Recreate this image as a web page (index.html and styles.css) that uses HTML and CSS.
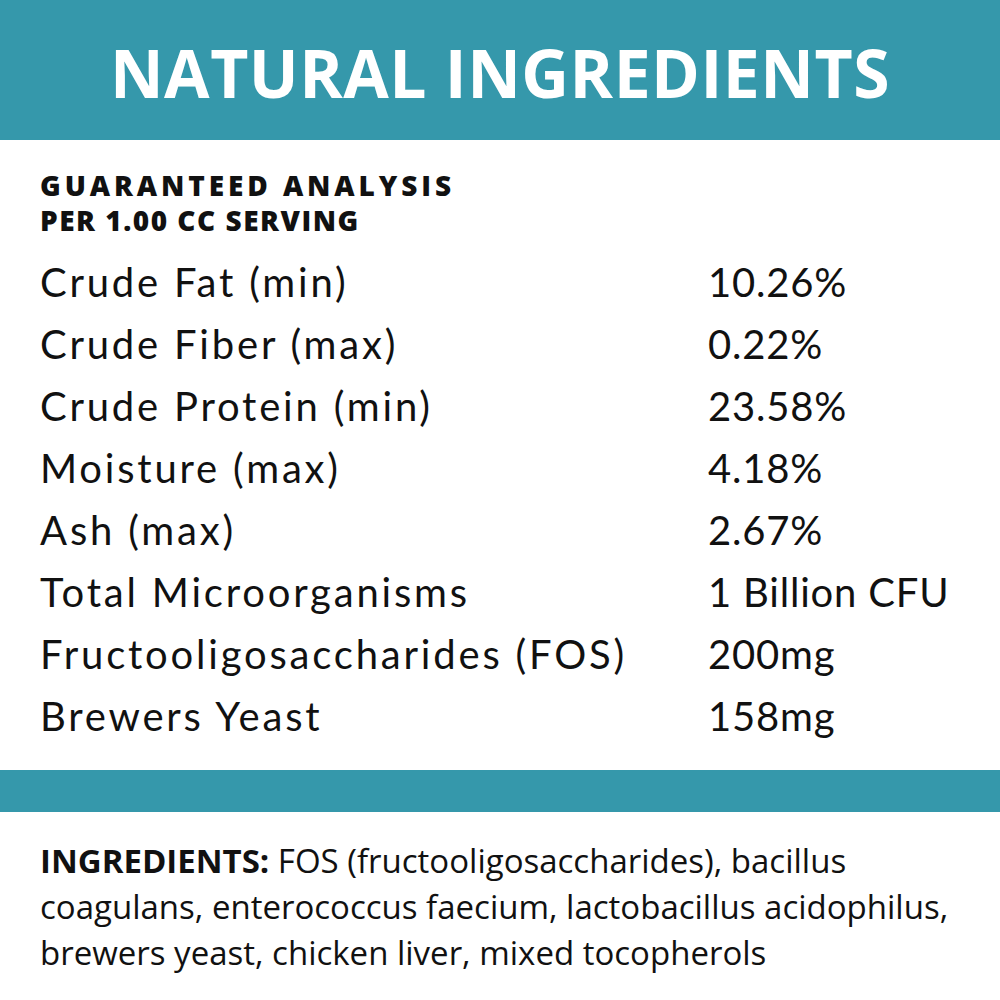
FILE: index.html
```html
<!DOCTYPE html>
<html>
<head>
<meta charset="utf-8">
<link rel="stylesheet" href="styles.css">
</head>
<body>
<header class="banner"><h1 class="title">NATURAL INGREDIENTS</h1></header>
<section class="analysis">
  <h2 class="heading"><span class="line1">GUARANTEED ANALYSIS</span><span class="line2">PER 1.00 CC SERVING</span></h2>
  <div class="table">
    <div class="label">Crude Fat (min)</div><div class="value">10.26%</div>
    <div class="label">Crude Fiber (max)</div><div class="value">0.22%</div>
    <div class="label">Crude Protein (min)</div><div class="value">23.58%</div>
    <div class="label">Moisture (max)</div><div class="value">4.18%</div>
    <div class="label">Ash (max)</div><div class="value">2.67%</div>
    <div class="label">Total Microorganisms</div><div class="value">1 Billion CFU</div>
    <div class="label">Fructooligosaccharides (FOS)</div><div class="value">200mg</div>
    <div class="label">Brewers Yeast</div><div class="value">158mg</div>
  </div>
</section>
<div class="band"></div>
<p class="ingredients"><strong>INGREDIENTS:</strong> FOS (fructooligosaccharides), bacillus coagulans, enterococcus faecium, lactobacillus acidophilus, brewers yeast, chicken liver, mixed tocopherols</p>
</body>
</html>
```
FILE: styles.css
```css
html, body { margin: 0; padding: 0; background: #fff; }
body { width: 1000px; height: 1000px; overflow: hidden; color: #111; }
.banner {
  height: 140px;
  background: #3598ab;
  display: flex;
  align-items: center;
  justify-content: center;
}
.title {
  margin: 0;
  padding-top: 3px;
  font-family: "Open Sans", sans-serif;
  font-weight: 700;
  font-size: 66px;
  letter-spacing: 0.5px;
  color: #fff;
}
.analysis {
  height: 630px;
  box-sizing: border-box;
  padding: 28px 40px 0 40px;
}
.heading {
  margin: 0 0 13px 0;
  font-family: "Open Sans", sans-serif;
  font-weight: 800;
  font-size: 28px;
  line-height: 35px;
  color: #111;
}
.line1, .line2 { display: block; white-space: nowrap; }
.line1 { letter-spacing: 3.9px; }
.line2 { letter-spacing: 1.5px; }
.table {
  display: grid;
  grid-template-columns: 668px 1fr;
  grid-auto-rows: 62px;
  align-items: center;
  font-family: "Lato", sans-serif;
  font-weight: 400;
  font-size: 40px;
  white-space: nowrap;
}
.label { letter-spacing: 2.8px; }
.value { letter-spacing: 0.8px; }
.band { height: 42px; background: #3598ab; }
.ingredients {
  margin: 26px 40px 0 40px;
  font-family: "Open Sans", sans-serif;
  font-size: 33px;
  line-height: 46px;
  color: #111;
}
.ingredients strong { font-weight: 700; }
```
